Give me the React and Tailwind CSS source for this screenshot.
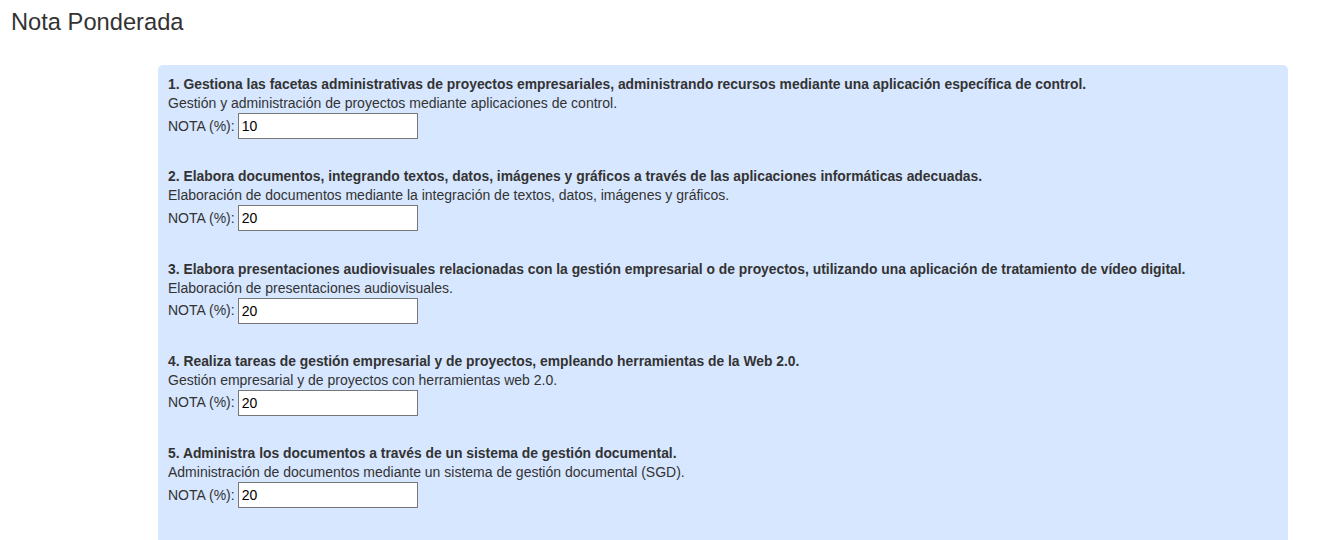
const items = [
  {
    title:
      "1. Gestiona las facetas administrativas de proyectos empresariales, administrando recursos mediante una aplicación específica de control.",
    desc: "Gestión y administración de proyectos mediante aplicaciones de control.",
    nota: "10",
  },
  {
    title:
      "2. Elabora documentos, integrando textos, datos, imágenes y gráficos a través de las aplicaciones informáticas adecuadas.",
    desc: "Elaboración de documentos mediante la integración de textos, datos, imágenes y gráficos.",
    nota: "20",
  },
  {
    title:
      "3. Elabora presentaciones audiovisuales relacionadas con la gestión empresarial o de proyectos, utilizando una aplicación de tratamiento de vídeo digital.",
    desc: "Elaboración de presentaciones audiovisuales.",
    nota: "20",
  },
  {
    title:
      "4. Realiza tareas de gestión empresarial y de proyectos, empleando herramientas de la Web 2.0.",
    desc: "Gestión empresarial y de proyectos con herramientas web 2.0.",
    nota: "20",
  },
  {
    title:
      "5. Administra los documentos a través de un sistema de gestión documental.",
    desc: "Administración de documentos mediante un sistema de gestión documental (SGD).",
    nota: "20",
  },
];

export default function App() {
  return (
    <div
      className="w-[1318px] h-[540px] overflow-hidden bg-white text-[#333333]"
      style={{ fontFamily: '"Liberation Sans", Arial, sans-serif' }}
    >
      <h1 className="pl-[11px] pt-[9px] text-[23.7px] leading-[26px] font-normal">
        Nota Ponderada
      </h1>

      <div className="ml-[158px] mt-[30px] w-[1130px] h-[520px] rounded-[5px] bg-[#d7e7ff] px-[10px] pt-[9px]">
        {items.map((item, i) => (
          <div key={i} className="mb-[27.25px]">
            <div className="text-[13.87px] leading-[20px] font-bold">{item.title}</div>
            <div className="text-[14px] leading-[19px]">{item.desc}</div>
            <div className="flex items-center h-[26px] text-[14px]">
              <span>NOTA (%):</span>
              <input
                type="text"
                defaultValue={item.nota}
                className="ml-[3px] w-[180px] h-[26px] border border-[#767676] bg-white px-[3px] text-[14px] text-black outline-none"
              />
            </div>
          </div>
        ))}
      </div>
    </div>
  );
}
